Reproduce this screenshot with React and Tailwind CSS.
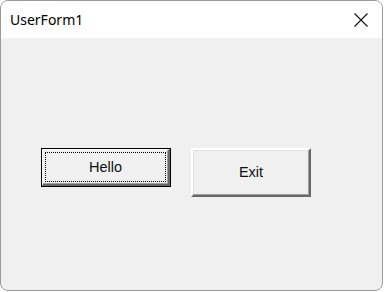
import React from 'react';

const App = () => {
  return (
    <div className="w-[384px] h-[292px] bg-white overflow-hidden">
      {/* Window */}
      <div className="w-[383px] h-[291px] rounded-[8px] border border-[#9a9a9a] overflow-hidden flex flex-col bg-[#f0f0f0]">
        {/* Title bar */}
        <div className="h-[37px] bg-white flex items-center justify-between shrink-0">
          <span className="pl-[9px] pb-[1px] text-[14px] text-black" style={{ fontFamily: '"Noto Sans", sans-serif' }}>
            UserForm1
          </span>
          <div className="w-[46px] h-[37px] flex items-center justify-center">
            <svg width="14" height="14" viewBox="0 0 14 14" className="ml-[4px]">
              <path d="M0.5 0.5 L13.5 13.5 M13.5 0.5 L0.5 13.5" stroke="#111" strokeWidth="1.1" fill="none" />
            </svg>
          </div>
        </div>

        {/* Form body */}
        <div className="flex-1 flex items-start gap-[20px] pl-[40px] pt-[110px]" style={{ fontFamily: '"Liberation Sans", Arial, sans-serif' }}>
          {/* Default (focused) button */}
          <div className="w-[130px] h-[39px] border border-black">
            <div className="w-full h-full border-t border-l border-white border-r-2 border-b-2 border-r-[#696969] border-b-[#696969] shadow-[inset_-1px_-1px_#a0a0a0]">
              <div className="w-full h-full p-[2px]">
                <div className="w-full h-full border border-dotted border-black flex items-center justify-center pt-[1px] text-[14.5px] text-[#111]">
                  Hello
                </div>
              </div>
            </div>
          </div>

          {/* Normal button */}
          <div className="w-[120px] h-[49px] border-t-2 border-l-2 border-white border-r-2 border-b-2 border-r-[#696969] border-b-[#696969] shadow-[inset_-1px_-1px_#a0a0a0,inset_1px_1px_#e3e3e3] flex items-center justify-center text-[14.5px] text-[#111]">
            Exit
          </div>
        </div>
      </div>
    </div>
  );
};

export default App;
